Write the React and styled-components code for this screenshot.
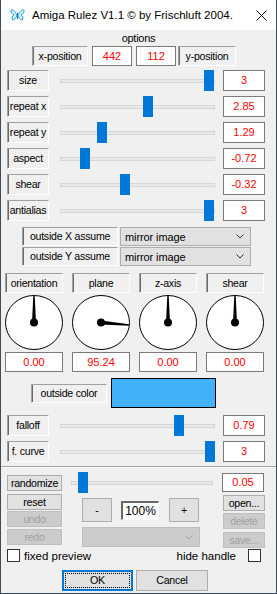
import React from 'react';
import styled, { createGlobalStyle, css } from 'styled-components';

const GlobalStyle = createGlobalStyle`
  html, body { margin: 0; padding: 0; background: #f0f0f0; }
  * { box-sizing: border-box; }
`;

const Window = styled.div`
  width: 277px;
  height: 594px;
  background: #f0f0f0;
  border: 1px solid #3c4b5e;
  border-top: none;
  display: flex;
  flex-direction: column;
  font-family: "Liberation Sans", Arial, sans-serif;
  font-size: 10.6px;
  letter-spacing: -0.25px;
  color: #000;
  overflow: hidden;
`;

const TitleBar = styled.div`
  height: 30px;
  flex-shrink: 0;
  background: #fff;
  display: flex;
  align-items: center;
  padding: 0 9px;
  letter-spacing: 0;
`;

const TitleText = styled.span`
  font-size: 11.5px;
  margin-left: 7px;
  white-space: nowrap;
`;

const CloseGlyph = styled.svg`
  margin-left: auto;
  display: block;
`;

const Client = styled.div`
  display: flex;
  flex-direction: column;
  flex: 1;
`;

const GroupTitle = styled.div`
  height: 14px;
  margin-top: 1px;
  line-height: 14px;
  text-align: center;
  font-size: 11px;
`;

const Row = styled.div`
  display: flex;
  align-items: ${p => p.$align || 'center'};
  height: ${p => (p.$h ? `${p.$h}px` : 'auto')};
  margin-top: ${p => p.$mt || 0}px;
  padding-left: ${p => p.$pl || 0}px;
  padding-right: ${p => p.$pr || 0}px;
  flex-shrink: 0;
`;

const boxText = css`
  white-space: nowrap;
  overflow: hidden;
  text-align: center;
  flex-shrink: 0;
`;

const SunkenLabel = styled.div`
  ${boxText};
  width: ${p => p.$w}px;
  height: ${p => p.$h || 20}px;
  line-height: ${p => (p.$h || 20) - 2}px;
  margin-left: ${p => p.$ml || 0}px;
  border-style: solid;
  border-width: 1px;
  border-color: #a0a0a0 #ffffff #ffffff #a0a0a0;
  box-shadow: inset 1px 0 0 #6a6a6a;
`;

const ValueBox = styled.div`
  ${boxText};
  width: ${p => p.$w || 42}px;
  height: ${p => p.$h || 21}px;
  line-height: ${p => (p.$h || 21) - 2}px;
  margin-left: ${p => p.$ml || 0}px;
  background: #fff;
  border: 1px solid #7a7a7a;
  color: #ff0000;
  font-size: 11px;
  letter-spacing: 0;
`;

const SliderArea = styled.div`
  position: relative;
  width: ${p => p.$w}px;
  height: 21px;
  margin-left: ${p => p.$ml}px;
  display: flex;
  align-items: center;
  flex-shrink: 0;
`;

const Track = styled.div`
  width: 100%;
  height: 4px;
  background: #e7eaea;
  border: 1px solid #d6d6d6;
`;

const Thumb = styled.div`
  position: absolute;
  top: 0;
  width: 10px;
  height: 21px;
  background: #0078d7;
`;

const Select = styled.div`
  width: ${p => p.$w}px;
  height: ${p => p.$h || 19}px;
  margin-left: ${p => p.$ml || 0}px;
  margin-top: ${p => p.$mt || 0}px;
  background: ${p => (p.$disabled ? '#cccccc' : '#e1e1e1')};
  border: 1px solid ${p => (p.$disabled ? '#bfbfbf' : '#adadad')};
  display: flex;
  align-items: center;
  padding: 0 6px 0 4px;
  flex-shrink: 0;
  font-size: 11px;
  letter-spacing: -0.1px;
  svg { margin-left: auto; }
`;

const DialGrid = styled.div`
  display: grid;
  grid-template-columns: 58px 58px 58px 59px;
  column-gap: 9px;
  margin-top: 7px;
  padding-left: 4px;
  flex-shrink: 0;
`;

const DialColumn = styled.div`
  display: flex;
  flex-direction: column;
`;

const DialFace = styled.svg`
  display: block;
  margin: 2px 0 1px;
`;

const Swatch = styled.div`
  width: 105px;
  height: 30px;
  margin-left: 4px;
  background: #41b1fc;
  border: 1px solid #000;
  flex-shrink: 0;
`;

const Separator = styled.div`
  height: 2px;
  margin-top: 4px;
  border-top: 1px solid #a0a0a0;
  border-bottom: 1px solid #ffffff;
  flex-shrink: 0;
`;

const Button = styled.div`
  ${boxText};
  position: relative;
  width: ${p => p.$w}px;
  height: ${p => p.$h || 16}px;
  line-height: ${p => (p.$h || 16) - 2}px;
  margin-top: ${p => p.$mt || 0}px;
  margin-left: ${p => p.$ml || 0}px;
  background: ${p => (p.$disabled ? '#cccccc' : '#e1e1e1')};
  border: 1px solid ${p => (p.$disabled ? '#bfbfbf' : '#adadad')};
  color: ${p => (p.$disabled ? '#a0a0a0' : '#000')};
  ${p => p.$default && css`
    border: 2px solid #0078d7;
    line-height: ${(p.$h || 16) - 4}px;
    &::after {
      content: '';
      position: absolute;
      inset: 1px;
      border: 1px dotted #000;
    }
  `}
`;

const Column = styled.div`
  display: flex;
  flex-direction: column;
  width: ${p => p.$w}px;
  margin-left: ${p => p.$ml || 0}px;
  flex-shrink: 0;
`;

const ZoomBox = styled.div`
  ${boxText};
  width: 38px;
  height: 19px;
  line-height: 16px;
  margin-left: 9px;
  background: #fcfcfc;
  border-style: solid;
  border-width: 2px 1px 1px 2px;
  border-color: #6a6a6a #ffffff #ffffff #6a6a6a;
  font-size: 12px;
  letter-spacing: 0;
`;

const Check = styled.div`
  width: 13px;
  height: 13px;
  background: #fff;
  border: 1px solid #333;
  flex-shrink: 0;
  margin-left: ${p => p.$ml || 0}px;
`;

const CheckText = styled.span`
  margin-left: ${p => p.$ml || 0}px;
  font-size: 11.5px;
  letter-spacing: 0;
  white-space: nowrap;
`;

const Spacer = styled.div`flex: 1;`;

const Chevron = ({ color = '#333' }) => (
  <svg width="8" height="5" viewBox="0 0 8 5">
    <polyline points="0.5,0.5 4,4 7.5,0.5" fill="none" stroke={color} strokeWidth="1" />
  </svg>
);

const Butterfly = () => (
  <svg width="15" height="13" viewBox="0 0 15 13">
    <path d="M7 6 C5 2 3 0.5 1 1 C0.5 3 2 5 4 6 C2 7 1.5 9.5 2.5 11 C4 11 6 9 7 7 Z" fill="#cdeefa" stroke="#2f9fe0" strokeWidth="1" />
    <path d="M8 6 C10 2 12 0.5 14 1 C14.5 3 13 5 11 6 C13 7 13.5 9.5 12.5 11 C11 11 9 9 8 7 Z" fill="#cdeefa" stroke="#2f9fe0" strokeWidth="1" />
    <line x1="7.5" y1="4" x2="7.5" y2="10" stroke="#1b6fb0" strokeWidth="1" />
  </svg>
);

const Dial = ({ angle }) => {
  const cx = 29, cy = 27.5, rx = 28.5, ry = 27;
  const rad = (angle * Math.PI) / 180;
  const dx = Math.sin(rad), dy = -Math.cos(rad);
  const edge = 1 / Math.sqrt((dx / rx) ** 2 + (dy / ry) ** 2);
  const len = edge - 0.5;
  const px = -dy, py = dx;
  const tx = cx + dx * len, ty = cy + dy * len;
  const bw = 2, tw = 0.7;
  const pts = [
    [cx + px * bw, cy + py * bw],
    [tx + px * tw, ty + py * tw],
    [tx - px * tw, ty - py * tw],
    [cx - px * bw, cy - py * bw],
  ].map(p => p.join(',')).join(' ');
  return (
    <DialFace width="58" height="56" viewBox="0 0 58 56">
      <ellipse cx={cx} cy={cy} rx={rx} ry={ry} fill="#fff" stroke="#000" strokeWidth="1" />
      <polygon points={pts} fill="#000" />
      <circle cx={cx} cy={cy} r="4" fill="#000" />
    </DialFace>
  );
};

const Slider = ({ w, ml, pos }) => (
  <SliderArea $w={w} $ml={ml}>
    <Track />
    <Thumb style={{ left: pos }} />
  </SliderArea>
);

const sliders = [
  { label: 'size', pos: 144, value: '3' },
  { label: 'repeat x', pos: 83, value: '2.85' },
  { label: 'repeat y', pos: 37, value: '1.29' },
  { label: 'aspect', pos: 20, value: '-0.72' },
  { label: 'shear', pos: 60, value: '-0.32' },
  { label: 'antialias', pos: 144, value: '3' },
];

const lower = [
  { label: 'falloff', pos: 114, value: '0.79' },
  { label: 'f. curve', pos: 145, value: '3' },
];

const dials = [
  { label: 'orientation', angle: 0, value: '0.00' },
  { label: 'plane', angle: 95.24, value: '95.24' },
  { label: 'z-axis', angle: 0, value: '0.00' },
  { label: 'shear', angle: 0, value: '0.00' },
];

const SliderRow = ({ s, mt }) => (
  <Row $h={21} $mt={mt} $pl={6}>
    <SunkenLabel $w={42} $h={21}>{s.label}</SunkenLabel>
    <Slider w={155} ml={11} pos={s.pos} />
    <ValueBox $ml={8}>{s.value}</ValueBox>
  </Row>
);

export default function App() {
  return (
    <>
      <GlobalStyle />
      <Window>
        <TitleBar>
          <Butterfly />
          <TitleText>Amiga Rulez V1.1 © by Frischluft 2004.</TitleText>
          <CloseGlyph width="11" height="11" viewBox="0 0 11 11">
            <line x1="0.5" y1="0.5" x2="10.5" y2="10.5" stroke="#111" strokeWidth="1" />
            <line x1="10.5" y1="0.5" x2="0.5" y2="10.5" stroke="#111" strokeWidth="1" />
          </CloseGlyph>
        </TitleBar>
        <Client>
          <GroupTitle>options</GroupTitle>
          <Row $h={20} $mt={1} $pl={31}>
            <SunkenLabel $w={56}>x-position</SunkenLabel>
            <ValueBox $w={40} $h={20} $ml={4}>442</ValueBox>
            <ValueBox $w={40} $h={20} $ml={4}>112</ValueBox>
            <SunkenLabel $w={58} $ml={2}>y-position</SunkenLabel>
          </Row>
          {sliders.map((s, i) => (
            <SliderRow key={s.label} s={s} mt={i === 0 ? 4 : 5} />
          ))}
          <Row $h={19} $mt={6} $pl={21}>
            <SunkenLabel $w={96} $h={19}>outside X assume</SunkenLabel>
            <Select $w={131} $ml={2}>mirror image<Chevron /></Select>
          </Row>
          <Row $h={19} $mt={1} $pl={21}>
            <SunkenLabel $w={96} $h={19}>outside Y assume</SunkenLabel>
            <Select $w={131} $ml={2}>mirror image<Chevron /></Select>
          </Row>
          <DialGrid>
            {dials.map(d => (
              <DialColumn key={d.label}>
                <SunkenLabel $w={58}>{d.label}</SunkenLabel>
                <Dial angle={d.angle} />
                <ValueBox $w={58} $h={20}>{d.value}</ValueBox>
              </DialColumn>
            ))}
          </DialGrid>
          <Row $h={30} $mt={6} $pl={30}>
            <SunkenLabel $w={76} $h={19}>outside color</SunkenLabel>
            <Swatch />
          </Row>
          {lower.map((s, i) => (
            <SliderRow key={s.label} s={s} mt={i === 0 ? 7 : 5} />
          ))}
          <Separator />
          <Row $h={21} $mt={4} $pl={6}>
            <Button $w={55} $h={16}>randomize</Button>
            <Slider w={142} ml={9} pos={7} />
            <ValueBox $ml={9} $h={19}>0.05</ValueBox>
          </Row>
          <Row $align="flex-start" $mt={1} $pl={6}>
            <Column $w={55}>
              <Button $w={55}>reset</Button>
              <Button $w={55} $mt={1} $disabled>undo</Button>
              <Button $w={55} $mt={2} $disabled>redo</Button>
            </Column>
            <Column $w={118} $ml={20}>
              <Row $h={24} $mt={4}>
                <Button $w={30} $h={24}>-</Button>
                <ZoomBox>100%</ZoomBox>
                <Button $w={30} $h={24} $ml={10}>+</Button>
              </Row>
              <Select $w={118} $h={20} $mt={5} $disabled>
                <Chevron color="#9a9a9a" />
              </Select>
            </Column>
            <Column $w={42} $ml={23}>
              <Button $w={42} $mt={1}>open...</Button>
              <Button $w={42} $mt={2} $disabled>delete</Button>
              <Button $w={42} $mt={3} $disabled>save...</Button>
            </Column>
          </Row>
          <Row $h={13} $mt={1} $pl={6} $pr={15}>
            <Check />
            <CheckText $ml={4}>fixed preview</CheckText>
            <Spacer />
            <CheckText>hide handle</CheckText>
            <Check $ml={12} />
          </Row>
          <Row $h={21} $mt={8} $pl={61}>
            <Button $w={71} $h={21} $default>OK</Button>
            <Button $w={72} $h={21} $ml={3}>Cancel</Button>
          </Row>
        </Client>
      </Window>
    </>
  );
}
